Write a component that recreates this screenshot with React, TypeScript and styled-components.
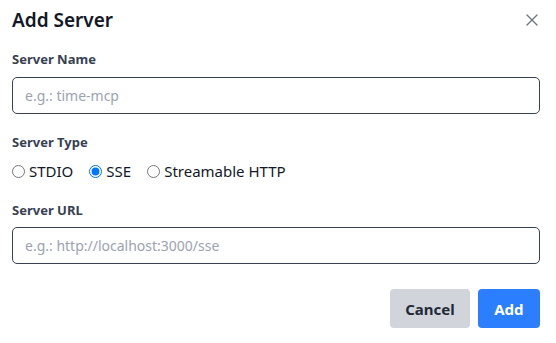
import styled, { createGlobalStyle } from "styled-components";

const GlobalStyle = createGlobalStyle`
  html, body {
    margin: 0;
    padding: 0;
    background: #fff;
  }
  body {
    font-family: "Noto Sans", "Open Sans", sans-serif;
  }
`;

const Dialog = styled.div`
  width: 556px;
  height: 343px;
  box-sizing: border-box;
  padding: 6px 16px 0 12px;
  display: flex;
  flex-direction: column;
  background: #fff;
`;

const Header = styled.div`
  display: flex;
  align-items: center;
  justify-content: space-between;
  height: 28px;
`;

const Title = styled.h2`
  margin: 0;
  font-size: 19px;
  font-weight: 600;
  line-height: 28px;
  color: #111827;
`;

const CloseButton = styled.button`
  width: 16px;
  height: 16px;
  padding: 0;
  border: none;
  background: none;
  display: flex;
  align-items: center;
  justify-content: center;
  color: #6b7280;
  cursor: pointer;
`;

const Field = styled.div<{ $top: number }>`
  display: flex;
  flex-direction: column;
  margin-top: ${(p) => p.$top}px;
`;

const Label = styled.label<{ $gap?: number }>`
  font-size: 13px;
  font-weight: 700;
  line-height: 20px;
  color: #374151;
  margin-bottom: ${(p) => p.$gap ?? 8}px;
`;

const Input = styled.input`
  box-sizing: border-box;
  width: 100%;
  height: 37px;
  padding: 0 12px;
  border: 1px solid #374151;
  border-radius: 5px;
  font-family: inherit;
  font-size: 14px;
  color: #111827;
  outline: none;

  &::placeholder {
    color: #9ca3af;
  }
`;

const RadioRow = styled.div`
  display: flex;
  align-items: center;
  gap: 16px;
  height: 20px;
`;

const RadioOption = styled.label`
  display: flex;
  align-items: center;
  gap: 4px;
  font-size: 15px;
  color: #111827;
  cursor: pointer;

  input {
    margin: 0;
    width: 13px;
    height: 13px;
  }
`;

const Footer = styled.div`
  display: flex;
  justify-content: flex-end;
  gap: 8px;
  margin-top: 25px;
`;

const Button = styled.button<{ $primary?: boolean }>`
  height: 39px;
  padding: 0 ${(p) => (p.$primary ? "16.5px" : "15px")};
  border: none;
  border-radius: 4px;
  font-family: inherit;
  font-size: 15px;
  font-weight: 700;
  cursor: pointer;
  background: ${(p) => (p.$primary ? "#2b7fff" : "#d1d5db")};
  color: ${(p) => (p.$primary ? "#ffffff" : "#1f2937")};
`;

const types = ["STDIO", "SSE", "Streamable HTTP"];

export default function App() {
  return (
    <>
      <GlobalStyle />
      <Dialog>
        <Header>
          <Title>Add Server</Title>
          <CloseButton aria-label="Close">
            <svg width="12" height="12" viewBox="0 0 12 12" fill="none" stroke="currentColor" strokeWidth="1.3" strokeLinecap="round">
              <path d="M1 1l10 10M11 1L1 11" />
            </svg>
          </CloseButton>
        </Header>

        <Field $top={15}>
          <Label>Server Name</Label>
          <Input placeholder="e.g.: time-mcp" />
        </Field>

        <Field $top={18}>
          <Label $gap={9}>Server Type</Label>
          <RadioRow>
            {types.map((t) => (
              <RadioOption key={t}>
                <input type="radio" name="type" defaultChecked={t === "SSE"} />
                {t}
              </RadioOption>
            ))}
          </RadioRow>
        </Field>

        <Field $top={19}>
          <Label $gap={7}>Server URL</Label>
          <Input placeholder="e.g.: http://localhost:3000/sse" />
        </Field>

        <Footer>
          <Button>Cancel</Button>
          <Button $primary>Add</Button>
        </Footer>
      </Dialog>
    </>
  );
}
